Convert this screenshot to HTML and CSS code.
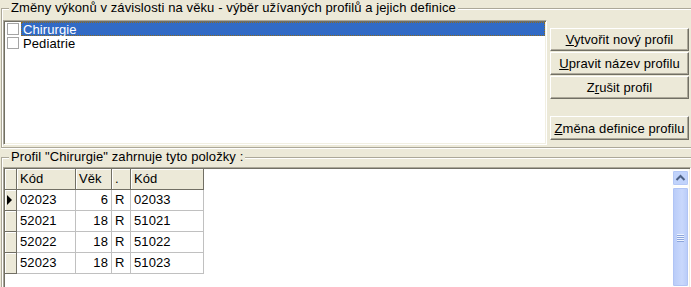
FILE: index.html
```html
<!DOCTYPE html>
<html lang="cs">
<head>
  <meta charset="UTF-8" />
  <title>Profily výkonů</title>
  <link rel="stylesheet" href="styles.css">
</head>
<body>
  <section class="group group-top">
    <div class="group-title">Změny výkonů v závislosti na věku - výběr užívaných profilů a jejich definice</div>
    <div class="group-body">
      <div class="listbox">
        <div class="list-item selected"><span class="check"></span><span class="label">Chirurgie</span></div>
        <div class="list-item"><span class="check"></span><span class="label">Pediatrie</span></div>
      </div>
      <div class="actions">
        <button class="btn btn-first"><u>V</u>ytvořit nový profil</button>
        <button class="btn"><u>U</u>pravit název profilu</button>
        <button class="btn">Z<u>r</u>ušit profil</button>
        <button class="btn btn-apart"><u>Z</u>měna definice profilu</button>
      </div>
    </div>
  </section>

  <section class="group group-bottom">
    <div class="group-title">Profil "Chirurgie" zahrnuje tyto položky :</div>
    <div class="panel">
      <div class="grid">
        <div class="hd hd-ind"></div>
        <div class="hd">Kód</div>
        <div class="hd">Věk</div>
        <div class="hd">.</div>
        <div class="hd">Kód</div>

        <div class="ind"><span class="arrow"></span></div>
        <div class="cell">02023</div>
        <div class="cell num">6</div>
        <div class="cell">R</div>
        <div class="cell">02033</div>

        <div class="ind"></div>
        <div class="cell">52021</div>
        <div class="cell num">18</div>
        <div class="cell">R</div>
        <div class="cell">51021</div>

        <div class="ind"></div>
        <div class="cell">52022</div>
        <div class="cell num">18</div>
        <div class="cell">R</div>
        <div class="cell">51022</div>

        <div class="ind"></div>
        <div class="cell">52023</div>
        <div class="cell num">18</div>
        <div class="cell">R</div>
        <div class="cell">51023</div>
      </div>
      <div class="scrollbar">
        <div class="sb-up">
          <svg width="15" height="15" viewBox="0 0 15 15"><polyline points="3.5,9 7.5,5 11.5,9" fill="none" stroke="#4D6185" stroke-width="2"/></svg>
        </div>
        <div class="sb-thumb"><span class="grip"></span></div>
      </div>
    </div>
  </section>
</body>
</html>
```

FILE: styles.css
```css
* {
  box-sizing: border-box;
}

html, body {
  margin: 0;
}

body {
  width: 691px;
  height: 287px;
  overflow: hidden;
  background: #ece9d8;
  font: 13px "Liberation Sans", Arial, sans-serif;
  letter-spacing: 0.1px;
  color: #000;
}

/* group boxes */
.group {
  margin-left: 1px;
  border-top: 1px solid #aca899;
  border-left: 1px solid #aca899;
  box-shadow: inset 1px 1px 0 #fff;
}

.group-top {
  margin-top: 8px;
  height: 140px;
  border-bottom: 1px solid #aca899;
  box-shadow: inset 1px 1px 0 #fff, 0 1px 0 #fff;
}

.group-bottom {
  margin-top: 9px;
  height: 130px;
}

.group-title {
  width: max-content;
  margin: -9px 0 0 7px;
  padding: 0 2px;
  line-height: 16px;
  background: #ece9d8;
}

.group-body {
  display: flex;
  margin-top: 4px;
}

/* list with checkboxes */
.listbox {
  margin-left: 1px;
  width: 544px;
  height: 125px;
  padding: 1px;
  background: #fff;
  border: 1px solid;
  border-color: #aca899 #fff #fff #aca899;
  box-shadow: inset 1px 1px 0 #716f64, inset -1px -1px 0 #f1efe2;
}

.list-item {
  display: flex;
  align-items: center;
  height: 14px;
}

.check {
  width: 12px;
  height: 12px;
  margin-left: 2px;
  border: 1px solid #a5a5a5;
  background: #fff;
}

.label {
  flex: 1;
  margin-left: 2px;
  padding: 0 1px;
  height: 14px;
  line-height: 13px;
  border: 1px solid transparent;
}

.selected .label {
  background: #316ac5;
  color: #fff;
  border: 1px dotted #8a6a20;
}

/* buttons */
.actions {
  display: flex;
  flex-direction: column;
  padding-left: 3px;
}

.btn {
  width: 139px;
  height: 23px;
  margin-top: 1px;
  padding: 0;
  font: inherit;
  letter-spacing: inherit;
  color: #000;
  background: #ece9d8;
  border: 1px solid;
  border-color: #fff #716f64 #716f64 #fff;
  box-shadow: inset -1px -1px 0 #aca899;
}

.btn-first {
  margin-top: 8px;
}

.btn-apart {
  margin-top: 17px;
  height: 24px;
}

/* data grid */
.panel {
  display: flex;
  margin: 2px 0 0 1px;
  height: 120px;
  padding: 1px 1px 0 1px;
  background: #fff;
  border: 1px solid;
  border-color: #aca899 #fff #fff #aca899;
  border-bottom: 0;
  box-shadow: inset 1px 1px 0 #716f64, inset -1px 0 0 #f1efe2;
}

.grid {
  display: grid;
  grid-template-columns: 12px 59px 36px 19px 73px;
  grid-auto-rows: 21px;
  align-self: flex-start;
}

.hd {
  padding-left: 3px;
  line-height: 20px;
  background: #ece9d8;
  border-right: 1px solid #716f64;
  border-bottom: 1px solid #716f64;
  box-shadow: inset 1px 1px 0 #fff;
}

.cell {
  padding: 0 3px;
  line-height: 20px;
  border-right: 1px solid #c0c0c0;
  border-bottom: 1px solid #c0c0c0;
}

.num {
  text-align: right;
}

.ind {
  display: flex;
  align-items: center;
  padding-left: 2px;
  background: #ece9d8;
  border-right: 1px solid #716f64;
  border-bottom: 1px solid #716f64;
  box-shadow: inset 1px 1px 0 #fff;
}

.arrow {
  width: 0;
  height: 0;
  border-left: 5px solid #000;
  border-top: 5px solid transparent;
  border-bottom: 5px solid transparent;
}

/* xp style scrollbar */
.scrollbar {
  display: flex;
  flex-direction: column;
  margin-left: auto;
  width: 17px;
  padding-top: 1px;
  background: #fdfdfa;
}

.sb-up {
  height: 16px;
  border: 1px solid #fff;
  border-radius: 2px;
  background: #c1d3fb;
  box-shadow: inset 0 0 0 1px #b4c8f6;
}

.sb-up svg {
  display: block;
}

.sb-thumb {
  display: flex;
  justify-content: center;
  flex: 1;
  margin-top: 1px;
  padding-top: 46px;
  border: 1px solid #fff;
  border-radius: 2px;
  background: linear-gradient(90deg, #b8cbf8, #c9d8fc 60%, #b8cbf8);
  box-shadow: inset 0 0 0 1px #b0c4f5;
}

.grip {
  width: 7px;
  height: 8px;
  background: repeating-linear-gradient(#eef4fe 0 1px, #8ca5dc 1px 2px);
}
```
